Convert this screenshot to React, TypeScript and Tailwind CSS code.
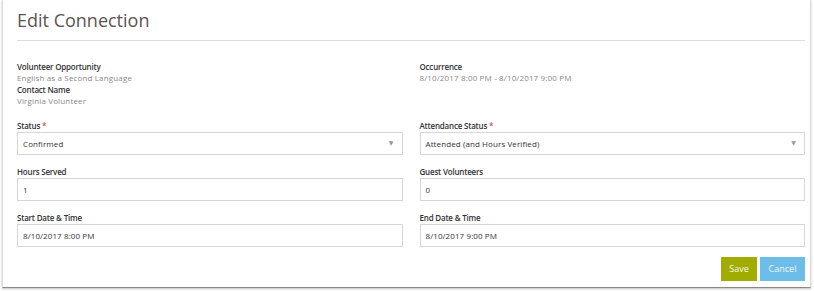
import React from 'react'

const font = { fontFamily: '"Open Sans", "DejaVu Sans", sans-serif' }

function Label({ children, required }: { children: React.ReactNode; required?: boolean }) {
  return (
    <div className="text-[8px] font-semibold leading-[11px] tracking-[-0.2px] text-[#333]">
      {children}
      {required && <span className="text-[#d9534f]"> *</span>}
    </div>
  )
}

function Value({ children }: { children: React.ReactNode }) {
  return <div className="text-[8px] leading-[12px] tracking-[0.15px] text-[#888]">{children}</div>
}

function Field({ label, value, required, select }: { label: string; value: string; required?: boolean; select?: boolean }) {
  return (
    <div className="flex flex-col gap-[1px]">
      <Label required={required}>{label}</Label>
      <div className="flex h-[23px] items-center justify-between border border-[#d6d6d6] bg-white pl-[5px] pr-[8px] text-[8px] tracking-[0.1px] text-[#333]">
        <span>{value}</span>
        {select && <span className="text-[6px] text-[#999]">▼</span>}
      </div>
    </div>
  )
}

export default function App() {
  return (
    <div className="h-[291px] w-[814px] bg-white" style={font}>
      <div className="ml-[2px] h-[288px] w-[809px] border-x border-b border-x-[#dcdcdc] border-b-[#888] bg-white pl-[14px] pr-[5px] shadow-[0_1px_2px_rgba(0,0,0,0.25)]">
        <h1 className="border-b border-[#dddddd] pb-[8px] pt-[8px] text-[18px] leading-[24px] text-[#5a5550]">
          Edit Connection
        </h1>
        <div className="mt-[20px] grid grid-cols-2 gap-x-[17px]">
          <div>
            <Label>Volunteer Opportunity</Label>
            <Value>English as a Second Language</Value>
            <Label>Contact Name</Label>
            <Value>Virginia Volunteer</Value>
          </div>
          <div>
            <Label>Occurrence</Label>
            <Value>8/10/2017 8:00 PM - 8/10/2017 9:00 PM</Value>
          </div>
        </div>
        <div className="mt-[13px] grid grid-cols-2 gap-x-[17px] gap-y-[11px]">
          <Field label="Status" value="Confirmed" required select />
          <Field label="Attendance Status" value="Attended (and Hours Verified)" required select />
          <Field label="Hours Served" value="1" />
          <Field label="Guest Volunteers" value="0" />
          <Field label="Start Date & Time" value="8/10/2017 8:00 PM" />
          <Field label="End Date & Time" value="8/10/2017 9:00 PM" />
        </div>
        <div className="mt-[10px] flex justify-end gap-[3px]">
          <button className="h-[24px] w-[36px] bg-[#a0ad00] text-[9px] text-white/90">Save</button>
          <button className="h-[24px] w-[45px] bg-[#6cbde8] text-[9px] text-white/90">Cancel</button>
        </div>
      </div>
    </div>
  )
}
